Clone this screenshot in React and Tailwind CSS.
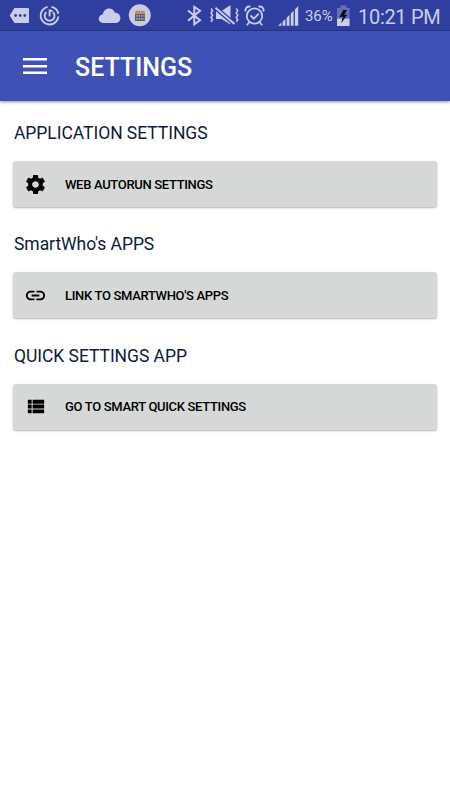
import React from "react";

const tint = "#c9cdea";

function StatusBar() {
  return (
    <div className="flex h-[31px] items-start border-b border-[#2a3886] bg-[#303f9f] text-[#c9cdea]">
      {/* message tag */}
      <svg className="ml-[9px] h-[31px] w-[21px] shrink-0" viewBox="9 0 21 31">
        <path d="M14.5 8H28a1 1 0 0 1 1 1v13a1 1 0 0 1-1 1H14.500L9.700 15.500Z" fill={tint} />
        <g fill="#303f9f">
          <circle cx="15.600" cy="15.500" r="1.400" />
          <circle cx="20.200" cy="15.500" r="1.400" />
          <circle cx="24.800" cy="15.500" r="1.400" />
        </g>
      </svg>
      {/* power swirl */}
      <svg className="ml-[9px] h-[31px] w-[22px] shrink-0" viewBox="39 0 22 31" fill="none" stroke={tint}>
        <path d="M47.600 6.900A8.900 8.900 0 1 0 58.400 16.500" strokeWidth="1.900" />
        <path d="M51.500 6.900a8.900 8.900 0 0 1 6.800 6.800" strokeWidth="1.900" />
        <path d="M46.300 12.200a4.900 4.900 0 1 0 6.600 0M49.600 9.500v7M49.600 10.200l3 1.200" strokeWidth="1.900" />
      </svg>
      {/* cloud */}
      <svg className="ml-[37px] h-[31px] w-[24px] shrink-0" viewBox="98 0 24 31">
        <path d="M103 23a4.200 4.200 0 0 1-.2-8.400c.5-3.600 3.200-6 6.200-6 2.800 0 4.900 1.600 5.900 4.100 3.100-.1 5.500 2.200 5.500 5.200 0 2.900-2.200 5.100-5.100 5.100Z" fill={tint} />
      </svg>
      {/* calendar badge */}
      <svg className="ml-[6px] h-[31px] w-[24px] shrink-0" viewBox="128 0 24 31">
        <circle cx="139.800" cy="15.300" r="11" fill="#cacbdc" />
        <path d="M135 13.500h10v7.500h-10Z" fill="#5c5c6c" />
        <path d="M135 11.500h10v2.300h-10Z" fill="#d0905f" />
        <path d="M136 11.500h8" stroke="#a8704e" strokeWidth="1.500" strokeDasharray="1.500 1" />
        <path d="M136 15.800h8.500M136 18.800h8.500" stroke="#b9b9c9" strokeWidth="1.200" strokeDasharray="1.500 1" />
      </svg>
      {/* bluetooth */}
      <svg className="ml-[35px] h-[31px] w-[15px] shrink-0" viewBox="187 0 15 31" fill="none" stroke={tint} strokeWidth="2">
        <path d="m188 10.500 12 9.800-5.700 4V6.800l5.700 4-12 9.900" />
      </svg>
      {/* muted with vibration */}
      <svg className="ml-[7px] h-[31px] w-[30px] shrink-0" viewBox="209 0 30 31" fill="none" stroke={tint}>
        <path d="M216 11h5.500l9-6v19.500l-9-5.500H216Z" fill={tint} stroke="none" />
        <path d="m215.500 7.800 19 16.200" stroke="#303f9f" strokeWidth="4.400" />
        <path d="m215.500 7.800 19 16.200" strokeWidth="1.900" />
        <path d="m211 8.500 1.600 2.200-1.600 2.200 1.600 2.300-1.600 2.300 1.600 2.200-1.600 2.200M236.200 8.500l1.600 2.200-1.600 2.200 1.600 2.300-1.600 2.300 1.600 2.200-1.600 2.200" strokeWidth="1.500" />
      </svg>
      {/* alarm */}
      <svg className="ml-[5px] h-[31px] w-[21px] shrink-0" viewBox="244 0 21 31" fill="none" stroke={tint}>
        <circle cx="254.500" cy="16" r="7.700" strokeWidth="1.800" />
        <path d="m250.500 15.500 3.300 3.200 5-5" strokeWidth="1.900" />
        <path d="M245.700 11.500c-1-3 1.500-5.600 4.800-4.800M263.300 11.500c1-3-1.500-5.600-4.800-4.800" strokeWidth="1.900" />
        <path d="m249.500 22-2.700 3.200M259.500 22l2.700 3.200" strokeWidth="1.700" />
      </svg>
      {/* signal strength */}
      <svg className="ml-[13px] h-[31px] w-[21px] shrink-0" viewBox="278 0 21 31" fill={tint}>
        <path d="M278 25.800 281.500 22.500v3.300ZM282.700 21.500l2.700-2.600v6.900h-2.700ZM286.700 17.700l2.800-2.700v10.800h-2.800ZM290.800 13.500l2.800-2.800v15.100h-2.800ZM294.900 9.400l3.300-3.400v19.800h-3.300Z" />
      </svg>
      <span className="ml-[6px] mt-[6px] w-[30px] whitespace-nowrap text-[15px] leading-5 tracking-[-0.1px]">36%</span>
      {/* charging battery */}
      <svg className="ml-[1px] h-[31px] w-[15px] shrink-0" viewBox="336 0 15 31">
        <path d="M340.500 5.500h6V8h3v18H337V8h3.500Z" fill="#6570b8" />
        <path d="M337 18.700h12.500V26H337Z" fill={tint} />
        <path d="m343.200 10-3.700 7h3.300l-1.600 6 6.300-8.300h-3.300l3-4.700Z" fill="#070b1c" />
      </svg>
      <span className="ml-[7px] mt-[5px] whitespace-nowrap text-[20px] leading-6 tracking-[-0.3px]">10:21 PM</span>
    </div>
  );
}

function GearIcon() {
  return (
    <svg className="size-[23px]" viewBox="0 0 24 24">
      <path d="M19.430 12.980c.04-.32.07-.64.07-.98s-.03-.66-.07-.98l2.110-1.650c.19-.15.24-.42.12-.64l-2-3.460c-.12-.22-.39-.3-.61-.22l-2.490 1c-.52-.4-1.080-.73-1.690-.98l-.38-2.650C14.460 2.180 14.250 2 14 2h-4c-.25 0-.46.18-.49.42l-.38 2.650c-.61.25-1.170.59-1.690.98l-2.490-1c-.23-.09-.49 0-.61.22l-2 3.460c-.13.22-.07.49.12.64l2.110 1.650c-.04.32-.07.65-.07.98s.03.66.07.98l-2.110 1.650c-.19.15-.24.42-.12.64l2 3.460c.12.22.39.3.61.22l2.490-1c.52.4 1.080.73 1.690.98l.38 2.650c.03.24.24.42.49.42h4c.25 0 .46-.18.49-.42l.38-2.650c.61-.25 1.170-.59 1.690-.98l2.490 1c.23.09.49 0 .61-.22l2-3.460c.12-.22.07-.49-.12-.64l-2.110-1.650zM12 15.500c-1.930 0-3.500-1.570-3.500-3.500s1.570-3.500 3.500-3.500 3.500 1.570 3.500 3.500-1.570 3.500-3.500 3.500z" />
    </svg>
  );
}

function LinkIcon() {
  return (
    <svg className="size-[23px]" viewBox="0 0 24 24">
      <path d="M3.900 12c0-1.710 1.390-3.100 3.100-3.100h4V7H7c-2.760 0-5 2.240-5 5s2.240 5 5 5h4v-1.900H7c-1.710 0-3.100-1.390-3.100-3.100zM8 13h8v-2H8v2zm9-6h-4v1.900h4c1.710 0 3.100 1.390 3.100 3.100s-1.390 3.100-3.100 3.100h-4V17h4c2.760 0 5-2.240 5-5s-2.240-5-5-5z" />
    </svg>
  );
}

function ListIcon() {
  return (
    <svg className="size-[23px]" viewBox="0 0 24 24">
      <path d="M4 14h4v-4H4v4zm0 5h4v-4H4v4zM4 9h4V5H4v4zm5 5h12v-4H9v4zm0 5h12v-4H9v4zM9 5v4h12V5H9z" />
    </svg>
  );
}

const sections = [
  { title: "APPLICATION SETTINGS", action: "WEB AUTORUN SETTINGS", Icon: GearIcon },
  { title: "SmartWho's APPS", action: "LINK TO SMARTWHO'S APPS", Icon: LinkIcon },
  { title: "QUICK SETTINGS APP", action: "GO TO SMART QUICK SETTINGS", Icon: ListIcon },
];

export default function App() {
  return (
    <div className="h-[800px] w-[450px] overflow-hidden bg-white font-['Roboto',sans-serif]">
      <StatusBar />
      <header className="flex h-[70px] items-center bg-[#3f51b5] pl-[23px] text-white shadow-[0_1px_3px_rgba(0,0,0,0.45)]">
        <svg className="h-[18px] w-6" viewBox="0 0 24 18" fill="currentColor">
          <path d="M0 1h24v2.500H0ZM0 8h24v2.500H0ZM0 14.500h24V17H0Z" />
        </svg>
        <h1 className="ml-7 mt-[3px] text-[25px] font-medium leading-8">SETTINGS</h1>
      </header>
      <main className="flex flex-col px-[13px] pt-[20px]">
        {sections.map(({ title, action, Icon }) => (
          <section key={title} className="h-[111.300px]">
            <h2 className="pl-[1px] text-[17.500px] leading-6 tracking-[-0.05px] text-[#0d1b38]">{title}</h2>
            <button className="mt-[16px] flex h-[46px] w-full items-center rounded-[3px] bg-[#d6d8d7] pl-[10.500px] text-[13px] font-medium text-black shadow-[0_1px_2px_rgba(0,0,0,0.3)]">
              <Icon />
              <span className="ml-[18.500px] mt-px leading-5 tracking-[-0.32px]">{action}</span>
            </button>
          </section>
        ))}
      </main>
    </div>
  );
}
